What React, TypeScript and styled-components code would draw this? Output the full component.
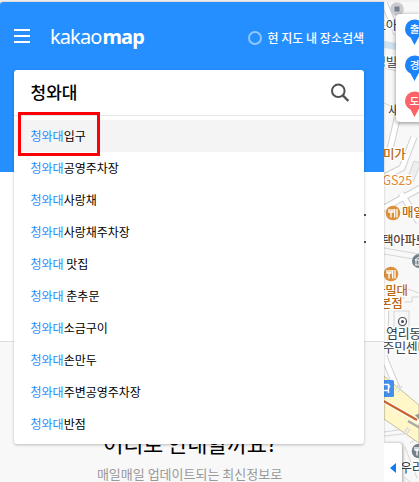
import React from "react";
import styled, { createGlobalStyle } from "styled-components";

const GlobalStyle = createGlobalStyle`
  * { box-sizing: border-box; }
  html, body, #root { height: 100%; }
  body {
    margin: 0;
    overflow: hidden;
    background: #fff;
    font-family: "Noto Sans CJK KR", "Noto Sans", sans-serif;
  }
`;

const Page = styled.div`
  display: grid;
  grid-template-columns: 384px 1fr;
  width: 419px;
  height: 482px;
  padding-top: 2px;
  background: #f0f0f0;
  overflow: hidden;
`;

const Sidebar = styled.aside`
  position: relative;
  z-index: 2;
  display: flex;
  flex-direction: column;
  height: 480px;
  background: #fff;
  border-top-left-radius: 3px;
  box-shadow: 0 0 2px rgba(0, 0, 0, 0.3);
`;

const Header = styled.header`
  flex: none;
  height: 170px;
  padding: 0 20px 0 14px;
  background: #258fff;
  border-top-left-radius: 3px;
`;

const TopBar = styled.div`
  display: flex;
  align-items: center;
  height: 68px;
  padding-top: 4px;
`;

const MenuButton = styled.button`
  display: flex;
  flex-direction: column;
  justify-content: space-between;
  width: 16px;
  height: 14px;
  margin: 0 20px 4px 0;
  padding: 0;
  border: 0;
  background: none;
`;

const MenuLine = styled.span`
  height: 2px;
  background: #fff;
`;

const Logo = styled.div`
  margin-bottom: 3px;
  color: #fff;
  font: 400 20px/28px "Noto Sans", sans-serif;
  letter-spacing: -0.9px;
  white-space: nowrap;
`;

const LogoStrong = styled.span`
  margin-left: 1px;
  font-weight: 700;
  letter-spacing: -0.8px;
`;

const AreaToggle = styled.label`
  display: flex;
  align-items: center;
  gap: 6px;
  margin: 0 0 1px auto;
  color: #fff;
  font-size: 12px;
  font-weight: 500;
  white-space: nowrap;
`;

const Ring = styled.span`
  width: 14px;
  height: 14px;
  border: 2px solid #8fc6ff;
  border-radius: 50%;
`;

const SearchPanel = styled.section`
  position: relative;
  z-index: 2;
  width: 350px;
  height: 374px;
  background: #fff;
  border-radius: 3px;
  box-shadow: 0 1px 3px rgba(0, 0, 0, 0.25);
`;

const SearchRow = styled.div`
  display: flex;
  align-items: center;
  justify-content: space-between;
  height: 46px;
  padding: 0 14px 0 16.500px;
  border-bottom: 1px solid #e8e8e8;
`;

const Query = styled.div`
  margin-bottom: 2px;
  color: #000;
  font-size: 17px;
  font-weight: 500;
  line-height: 24px;
`;

const Suggestions = styled.ul`
  margin: 0;
  padding: 4px 0 0;
  list-style: none;
`;

const Suggestion = styled.li<{ $active?: boolean }>`
  position: relative;
  height: 32px;
  padding-left: 16.500px;
  background: ${(p) => (p.$active ? "#f4f4f4" : "transparent")};
  color: #000;
  font-size: 12px;
  line-height: 32px;
  white-space: pre;
`;

const Match = styled.span`
  color: #258fff;
`;

const Marker = styled.span`
  position: absolute;
  top: -8.500px;
  left: 4px;
  width: 82px;
  height: 44px;
  border: 3px solid #fb0007;
`;

const Intro = styled.div`
  flex: none;
  display: flex;
  flex-direction: column;
  align-items: flex-end;
  gap: 25px;
  height: 169px;
  padding: 42px 18px 0 0;
`;

const Tick = styled.span`
  width: 2px;
  height: 2px;
  background: #555;
`;

const Guide = styled.div`
  flex: 1;
  padding-top: 83px;
  border-top: 1px solid #dedede;
  background: #f8f8f8;
  text-align: center;
  white-space: nowrap;
`;

const GuideTitle = styled.div`
  color: #000;
  font-size: 22px;
  font-weight: 400;
  line-height: 34px;
  letter-spacing: -0.4px;
  padding-right: 4px;
`;

const GuideText = styled.div`
  margin-top: 5px;
  padding-right: 5px;
  color: #999;
  font-size: 13px;
  line-height: 20px;
`;

const MapArea = styled.main`
  position: relative;
  height: 480px;
  overflow: hidden;
  background: #f8f8f8;
`;

const MapDrawing = styled.svg`
  display: block;
  font-family: "Noto Sans CJK KR", sans-serif;
`;

const PinCard = styled.div`
  position: absolute;
  top: 12px;
  left: 12px;
  display: flex;
  flex-direction: column;
  gap: 10px;
  width: 60px;
  height: 108px;
  padding: 5px 0 0 8px;
  background: #fff;
  border-radius: 4px;
  box-shadow: 0 1px 4px rgba(0, 0, 0, 0.45);
`;

const FoldButton = styled.button`
  position: absolute;
  top: 441px;
  left: 0;
  z-index: 3;
  display: flex;
  align-items: center;
  width: 18px;
  height: 50px;
  padding: 0 0 0 6px;
  border: 0;
  border-radius: 0 3px 0 0;
  background: #fff;
  box-shadow: 1px 0 3px rgba(0, 0, 0, 0.35);
`;

const suggestions = [
  "입구",
  "공영주차장",
  "사랑채",
  "사랑채주차장",
  " 맛집",
  " 춘추문",
  "소금구이",
  "손만두",
  "주변공영주차장",
  "반점",
];

const pins = [
  { label: "출", color: "#1d83fb" },
  { label: "경", color: "#1d83fb" },
  { label: "도", color: "#fc6266" },
];

function SearchIcon() {
  return (
    <svg width="20" height="20" viewBox="0 0 20 20" fill="none" stroke="#505050">
      <circle cx="8.300" cy="7.800" r="6.300" strokeWidth="2" />
      <path d="M12.800 12.400 18.400 18" strokeWidth="2.400" />
    </svg>
  );
}

function Pin({ label, color }: { label: string; color: string }) {
  return (
    <svg width="22" height="26" viewBox="0 0 22 26">
      <path d="M10.500 26 6.500 18.500C3 17 1 13.800 1 10a9.500 9.500 0 0 1 19 0c0 3.800-2 7-5.500 8.500Z" fill={color} />
      <text x="10.500" y="14" textAnchor="middle" fontSize="10.500" fontWeight="500" fill="#fff"
        fontFamily="Noto Sans CJK KR, sans-serif">{label}</text>
    </svg>
  );
}

function Food({ x, y, color = "#dc903b" }: { x: number; y: number; color?: string }) {
  return (
    <g transform={`translate(${x} ${y})`}>
      <circle r="7.300" fill={color} />
      <path d="M-4-4v3h4v-3M-2-4v8.500M1.700-4v8.500M4-4v8.500" fill="none" stroke="#fff" strokeWidth="1.300" />
    </g>
  );
}

function StreetMap() {
  return (
    <MapDrawing width="35" height="480" viewBox="384 2 35 480">
      <rect x="384" y="2" width="35" height="480" fill="#f8f8f8" />
      <path d="M384 41 397 43V50L384 48Z" fill="#cfe2ee" />
      <g fill="none" stroke="#cfcfcf" strokeWidth="7">
        <path d="M384 2 397 34M397 119 388 158M384 177 402 168 414 137M375 213 424 186M401 193 419 222M386 302 384 365M382 352 401 398" />
      </g>
      <g fill="none" stroke="#fff" strokeWidth="5">
        <path d="M384 2 397 34M397 119 388 158M384 177 402 168 414 137M375 213 424 186M401 193 419 222M386 302 384 365M382 352 401 398" />
      </g>
      <g fill="none" stroke="#d5d5d5">
        <path d="M384 68 397 71M384 103 397 109M384 248 419 254M384 254 419 260M403 299 408 289 419 293M404 302H412V297H419M394 311H409V327H394ZM384 432 419 427M384 436 412 433M410 443 422 436M405 447 417 478M404 477 415 486" />
        <path d="M408 177 414 161 421 163 413 182Z" fill="#eee" />
      </g>
      <path d="M384 376 419 405V443L384 419Z" fill="#fff7c7" stroke="#c7bea2" />
      <path d="M380 399 420 422" stroke="#fff" strokeWidth="4" />
      <path d="M380 399 417 420" stroke="#c8622b" strokeWidth="2.200" />
      <path d="m415 415 6-2v9Z" fill="#999" />
      <path d="m408 421 12 7" stroke="#aaa" strokeWidth="2.500" />
      <path d="m395 390 4-6m-1 8 4-6m2 47 4-6m-2 8 4-6" stroke="#ddd" strokeWidth="1.500" />
      <circle cx="397" cy="9" r="6.800" fill="#cbcbd0" />
      <rect x="394.500" y="6.500" width="5" height="5" fill="#74808c" />

      <g stroke="#fff" strokeWidth="2.500" paintOrder="stroke" fontSize="12.500" letterSpacing="-.3">
        <g fill="#344049">
          <text x="374.500" y="30">도아</text>
          <text x="374.500" y="66.500">정빌</text>
          <text x="388" y="115">새</text>
          <text x="386" y="338" fontSize="13">염리동</text>
          <text x="382.500" y="351.500" fontSize="13">주민센터</text>
          <text x="400" y="472" fontSize="13">우리</text>
        </g>
        <g fill="#bb6813" fontWeight="500">
          <text x="383" y="159">미가</text>
          <text x="402" y="217">매일</text>
          <text x="374" y="295">을밀대</text>
          <text x="380" y="308">본점</text>
        </g>
        <text x="382.500" y="184.500" fill="#e0862f" fontSize="12.500" letterSpacing="-.1">GS25</text>
        <text x="382" y="245" fill="#5d4037" fontWeight="500">택아파트</text>
      </g>
      <Food x={393} y={213} />
      <Food x={391} y={274} />
      <g transform="translate(419 261)">
        <circle r="7" fill="#71818c" />
        <path d="M-4-1H4M-4 4H4M-3-1V4M0-1V4M-4-1 0-4" fill="none" stroke="#fff" />
      </g>
      <circle cx="402.500" cy="321.500" r="4" fill="#fff" stroke="#444d56" strokeWidth="1.200" />
      <circle cx="402.500" cy="321.500" r="1.500" fill="#444d56" />
      <rect x="377" y="380" width="17" height="17" rx="1.500" fill="#438feb" />
      <path d="M381 384.500h7.500v6H381Zm0 6v2.500m7.500-2.500v2.500m1-5.500v-2" fill="none" stroke="#fff" strokeWidth="1.500" />
      <Food x={419} y={451} color="#71818c" />
    </MapDrawing>
  );
}

export default function App() {
  return (
    <>
      <GlobalStyle />
      <Page>
        <Sidebar>
          <Header>
            <TopBar>
              <MenuButton aria-label="메뉴">
                <MenuLine />
                <MenuLine />
                <MenuLine />
              </MenuButton>
              <Logo>
                kakao<LogoStrong>map</LogoStrong>
              </Logo>
              <AreaToggle>
                <Ring />
                현 지도 내 장소검색
              </AreaToggle>
            </TopBar>
            <SearchPanel>
              <SearchRow>
                <Query>청와대</Query>
                <SearchIcon />
              </SearchRow>
              <Suggestions>
                {suggestions.map((rest, i) => (
                  <Suggestion key={rest} $active={i === 0}>
                    <Match>청와대</Match>
                    {rest}
                    {i === 0 && <Marker />}
                  </Suggestion>
                ))}
              </Suggestions>
            </SearchPanel>
          </Header>
          <Intro>
            <Tick />
            <Tick />
          </Intro>
          <Guide>
            <GuideTitle>어디로 안내할까요?</GuideTitle>
            <GuideText>매일매일 업데이트되는 최신정보로</GuideText>
          </Guide>
        </Sidebar>
        <MapArea>
          <StreetMap />
          <PinCard>
            {pins.map((pin) => (
              <Pin key={pin.label} {...pin} />
            ))}
          </PinCard>
          <FoldButton aria-label="접기">
            <svg width="6" height="10" viewBox="0 0 6 10">
              <path d="M6 0v10L0 5Z" fill="#0c7cf5" />
            </svg>
          </FoldButton>
        </MapArea>
      </Page>
    </>
  );
}
